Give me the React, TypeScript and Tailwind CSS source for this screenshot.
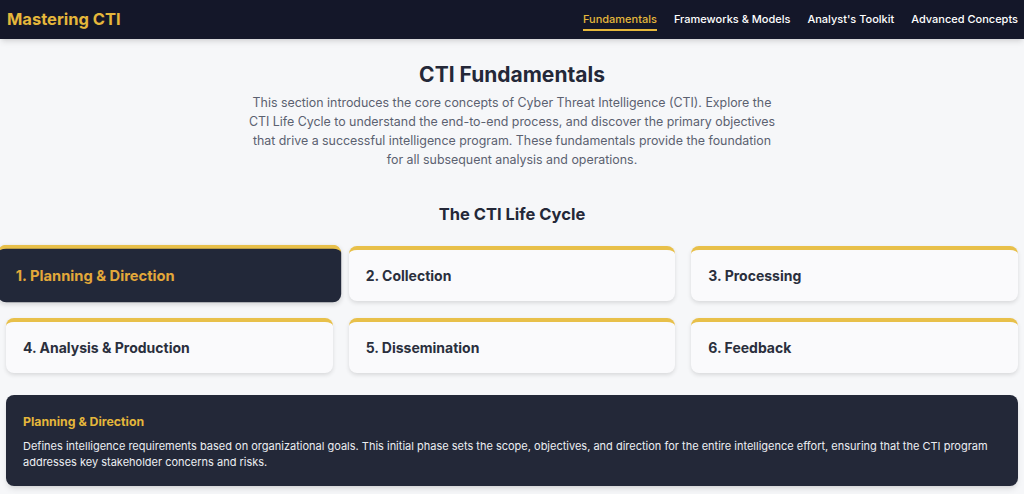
import { useState } from 'react'

const phases = [
  {
    name: 'Planning & Direction',
    text: 'Defines intelligence requirements based on organizational goals. This initial phase sets the scope, objectives, and direction for the entire intelligence effort, ensuring that the CTI program addresses key stakeholder concerns and risks.',
  },
  { name: 'Collection', text: '' },
  { name: 'Processing', text: '' },
  { name: 'Analysis & Production', text: '' },
  { name: 'Dissemination', text: '' },
  { name: 'Feedback', text: '' },
]

const navLinks = ['Fundamentals', 'Frameworks & Models', "Analyst's Toolkit", 'Advanced Concepts']

export default function App() {
  const [active, setActive] = useState(0)
  const current = phases[active]

  return (
    <div className="min-h-screen bg-[#f6f7f9] font-['Inter',sans-serif] text-[#1f2433]">
      <header className="h-[39px] bg-[#141729] flex items-center justify-between pl-[7px] pr-[6px] shadow-md">
        <h1 className="text-[16.5px] font-bold text-[#e5b73b]">Mastering CTI</h1>
        <nav className="flex items-center gap-[17px] text-[11px] font-medium">
          {navLinks.map((link, i) => (
            <a
              key={link}
              className={
                i === 0
                  ? 'text-[#e5b73b] border-b-2 border-[#e5b73b] pb-[1px] mt-[3px]'
                  : 'text-white'
              }
            >
              {link}
            </a>
          ))}
        </nav>
      </header>

      <main className="px-[6px] pt-[21px]">
        <section className="flex flex-col items-center text-center">
          <h2 className="text-[21px] font-bold leading-[30px] text-[#242838]">CTI Fundamentals</h2>
          <p className="max-w-[530px] mt-[3px] text-[12.4px] leading-[19px] text-[#5b6170]">
            This section introduces the core concepts of Cyber Threat Intelligence (CTI). Explore the CTI Life Cycle
            to understand the end-to-end process, and discover the primary objectives that drive a successful
            intelligence program. These fundamentals provide the foundation for all subsequent analysis and
            operations.
          </p>
          <h3 className="mt-[33px] text-[16.5px] font-bold text-[#242838]">The CTI Life Cycle</h3>
        </section>

        <div className="grid grid-cols-3 gap-x-4 gap-y-[17px] mt-[19px]">
          {phases.map((p, i) => (
            <button
              key={p.name}
              onClick={() => setActive(i)}
              className={
                'h-[55px] rounded-lg border-t-4 border-[#e8c04a] px-[17px] text-left text-[14px] font-bold shadow-[0_2px_4px_rgba(0,0,0,0.12)] ' +
                (i === active ? 'bg-[#222839] text-[#e3a83a] scale-105' : 'bg-[#fafafc] text-[#2a2f3d]')
              }
            >
              {i + 1}. {p.name}
            </button>
          ))}
        </div>

        <div className="mt-[22px] rounded-lg bg-[#232838] px-[17px] pt-[18px] pb-[16px] shadow-md">
          <h4 className="text-[12.3px] leading-[18px] font-bold text-[#e5b73b]">{current.name}</h4>
          <p className="mt-[7px] text-[11px] leading-[16px] text-[#eceef2]">{current.text}</p>
        </div>
      </main>
    </div>
  )
}
